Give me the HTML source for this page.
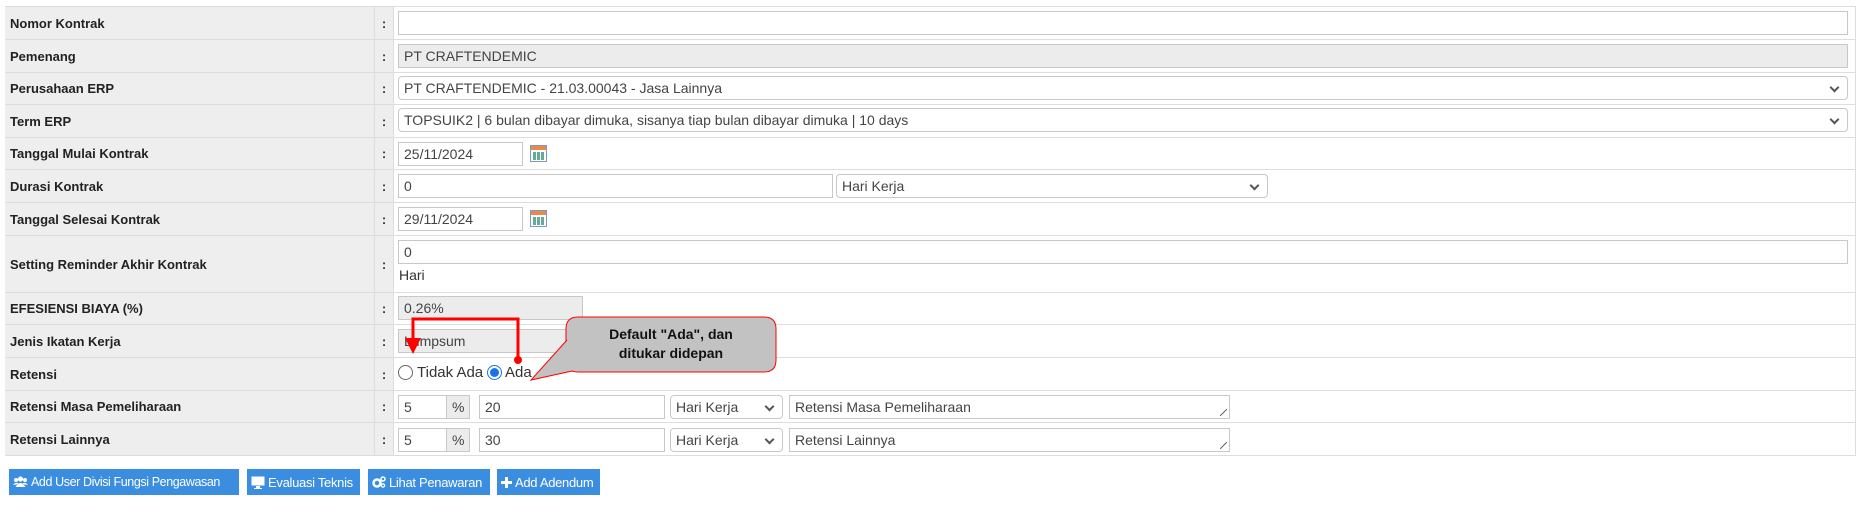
<!DOCTYPE html>
<html><head><meta charset="utf-8"><style>
*{box-sizing:border-box;margin:0;padding:0}
body{width:1858px;height:506px;background:#fff;font-family:"Liberation Sans",Arial,sans-serif;position:relative;overflow:hidden;color:#333}
.a{position:absolute}
.lab{position:absolute;left:5px;width:369px;background:#eee;border-top:1px solid #ddd;font-weight:bold;font-size:13px;color:#222;padding-left:5px;display:flex;align-items:center}
.col{position:absolute;left:374px;width:19px;background:#eee;border-top:1px solid #ddd;border-left:1px solid #ddd;font-weight:bold;font-size:13px;display:flex;align-items:center;justify-content:center}
.val{position:absolute;left:393px;width:1462px;border-top:1px solid #ddd;border-left:1px solid #ddd;background:#fff}
.in{position:absolute;border:1px solid #c8c8c8;background:#fff;font-size:14px;color:#444;padding-left:5px;display:flex;align-items:center;height:24px}
.g{background:#ececec}
.sel{border-radius:4px}
.sel:after{content:"";position:absolute;right:9px;top:7px;width:5px;height:5px;border-right:2px solid #555;border-bottom:2px solid #555;transform:rotate(45deg)}
.btn{position:absolute;top:469px;height:26px;background:#3a8ddf;color:#fff;font-size:13px;display:flex;align-items:center;padding-left:4px;gap:3px;white-space:nowrap;letter-spacing:-0.3px}
.cal{position:absolute;width:17px;height:17px;border:1px solid #7a9cc0;background:linear-gradient(#e98a4a 0 4px,#fff 4px);}
.cal:after{content:"";position:absolute;left:2px;top:6px;width:11px;height:8px;background:repeating-linear-gradient(90deg,#6a9 0 3px,#fff 3px 4px)}
.rad{position:absolute;width:15px;height:15px;border-radius:50%;border:1px solid #666;background:#fff}
.ta:after{content:"";position:absolute;right:2px;bottom:2px;width:7px;height:7px;background:linear-gradient(135deg,transparent 45%,#666 45% 55%,transparent 55%)}
</style></head><body>
<div class="a" style="left:5px;top:6px;width:1851px;height:450px;border:1px solid #ddd;border-top:none"></div>

<div class="lab" style="top:6px;height:33px">Nomor Kontrak</div><div class="col" style="top:6px;height:33px">:</div><div class="val" style="top:6px;height:33px"></div>
<div class="lab" style="top:39px;height:33px">Pemenang</div><div class="col" style="top:39px;height:33px">:</div><div class="val" style="top:39px;height:33px"></div>
<div class="lab" style="top:72px;height:32px">Perusahaan ERP</div><div class="col" style="top:72px;height:32px">:</div><div class="val" style="top:72px;height:32px"></div>
<div class="lab" style="top:104px;height:33px">Term ERP</div><div class="col" style="top:104px;height:33px">:</div><div class="val" style="top:104px;height:33px"></div>
<div class="lab" style="top:137px;height:32px">Tanggal Mulai Kontrak</div><div class="col" style="top:137px;height:32px">:</div><div class="val" style="top:137px;height:32px"></div>
<div class="lab" style="top:169px;height:33px">Durasi Kontrak</div><div class="col" style="top:169px;height:33px">:</div><div class="val" style="top:169px;height:33px"></div>
<div class="lab" style="top:202px;height:33px">Tanggal Selesai Kontrak</div><div class="col" style="top:202px;height:33px">:</div><div class="val" style="top:202px;height:33px"></div>
<div class="lab" style="top:235px;height:57px">Setting Reminder Akhir Kontrak</div><div class="col" style="top:235px;height:57px">:</div><div class="val" style="top:235px;height:57px"></div>
<div class="lab" style="top:292px;height:32px">EFESIENSI BIAYA (%)</div><div class="col" style="top:292px;height:32px">:</div><div class="val" style="top:292px;height:32px"></div>
<div class="lab" style="top:324px;height:33px">Jenis Ikatan Kerja</div><div class="col" style="top:324px;height:33px">:</div><div class="val" style="top:324px;height:33px"></div>
<div class="lab" style="top:357px;height:33px">Retensi</div><div class="col" style="top:357px;height:33px">:</div><div class="val" style="top:357px;height:33px"></div>
<div class="lab" style="top:390px;height:32px">Retensi Masa Pemeliharaan</div><div class="col" style="top:390px;height:32px">:</div><div class="val" style="top:390px;height:32px"></div>
<div class="lab" style="top:422px;height:33px">Retensi Lainnya</div><div class="col" style="top:422px;height:33px">:</div><div class="val" style="top:422px;height:33px"></div>

<div class="in" style="left:398px;top:11px;width:1450px"></div>
<div class="in g" style="left:398px;top:44px;width:1450px">PT CRAFTENDEMIC</div>
<div class="in sel" style="left:398px;top:76px;width:1450px">PT CRAFTENDEMIC - 21.03.00043 - Jasa Lainnya</div>
<div class="in sel" style="left:398px;top:108px;width:1450px">TOPSUIK2 | 6 bulan dibayar dimuka, sisanya tiap bulan dibayar dimuka | 10 days</div>
<div class="in" style="left:398px;top:142px;width:125px">25/11/2024</div><div class="cal" style="left:530px;top:145px"></div>
<div class="in" style="left:398px;top:174px;width:435px">0</div>
<div class="in sel" style="left:836px;top:174px;width:432px">Hari Kerja</div>
<div class="in" style="left:398px;top:207px;width:125px">29/11/2024</div><div class="cal" style="left:530px;top:210px"></div>
<div class="in" style="left:398px;top:240px;width:1450px">0</div>
<div class="a" style="left:399px;top:267px;font-size:14px;color:#333">Hari</div>
<div class="in g" style="left:398px;top:296px;width:185px">0.26%</div>
<div class="in g" style="left:398px;top:329px;width:185px">Lumpsum</div>

<div class="rad" style="left:398px;top:365px"></div>
<div class="a" style="left:417px;top:364px;font-size:15px;color:#333">Tidak Ada</div>
<div class="rad" style="left:487px;top:365px;border:1px solid #1a73e8"><div class="a" style="left:2px;top:2px;width:9px;height:9px;border-radius:50%;background:#1a73e8"></div></div>
<div class="a" style="left:505px;top:364px;font-size:15px;color:#333">Ada</div>

<div class="in" style="left:398px;top:395px;width:49px">5</div>
<div class="in g" style="left:446px;top:395px;width:24px">%</div>
<div class="in" style="left:479px;top:395px;width:186px">20</div>
<div class="in sel" style="left:670px;top:395px;width:113px">Hari Kerja</div>
<div class="in ta" style="left:789px;top:395px;width:441px">Retensi Masa Pemeliharaan</div>

<div class="in" style="left:398px;top:428px;width:49px">5</div>
<div class="in g" style="left:446px;top:428px;width:24px">%</div>
<div class="in" style="left:479px;top:428px;width:186px">30</div>
<div class="in sel" style="left:670px;top:428px;width:113px">Hari Kerja</div>
<div class="in ta" style="left:789px;top:428px;width:441px">Retensi Lainnya</div>

<svg class="a" style="left:0;top:0" width="1858" height="506">
<path d="M518 360 V319 H413 V340" fill="none" stroke="#f00" stroke-width="3"/>
<path d="M405 338 L421 338 L413 354 Z" fill="#f00"/>
<circle cx="518" cy="360" r="4" fill="#f00"/>
<path d="M578 317 Q566 317 566 329 V360 Q566 372 578 372 H764 Q776 372 776 360 V329 Q776 317 764 317 Z" fill="#c2c2c2" stroke="#f00" stroke-width="1"/>
<path d="M567 340 L531 380 L572 371" fill="#c2c2c2" stroke="#f00" stroke-width="1"/>
<path d="M567 342 L567 370 L571 370 Z" fill="#c2c2c2"/>
<text x="671" y="339" text-anchor="middle" font-family="Liberation Sans" font-weight="bold" font-size="14" fill="#111">Default "Ada", dan</text>
<text x="671" y="358" text-anchor="middle" font-family="Liberation Sans" font-weight="bold" font-size="14" fill="#111">ditukar didepan</text>
</svg>

<div class="btn" style="left:9px;width:230px;font-size:12.5px;letter-spacing:-0.4px"><svg width="15" height="12" viewBox="0 0 15 12"><circle cx="7.5" cy="3" r="2.6" fill="#fff"/><circle cx="3" cy="4" r="2" fill="#fff"/><circle cx="12" cy="4" r="2" fill="#fff"/><path d="M2.5 11 Q7.5 3 12.5 11Z M0 9 Q3 5 6 8 Z M9 8 Q12 5 15 9Z" fill="#fff"/></svg>Add User Divisi Fungsi Pengawasan</div>
<div class="btn" style="left:247px;width:113px"><svg width="14" height="13" viewBox="0 0 14 13"><rect x="0.5" y="0.5" width="13" height="9" fill="#fff"/><rect x="5" y="10" width="4" height="2" fill="#fff"/><rect x="3" y="12" width="8" height="1" fill="#fff"/></svg>Evaluasi Teknis</div>
<div class="btn" style="left:368px;width:122px"><svg width="14" height="12" viewBox="0 0 14 12"><circle cx="5" cy="7" r="3.5" fill="none" stroke="#fff" stroke-width="2.5"/><circle cx="11" cy="3" r="2" fill="none" stroke="#fff" stroke-width="1.5"/><circle cx="11" cy="9.5" r="1.6" fill="none" stroke="#fff" stroke-width="1.3"/></svg>Lihat Penawaran</div>
<div class="btn" style="left:497px;width:103px"><svg width="11" height="11" viewBox="0 0 11 11"><path d="M4 0h3v4h4v3H7v4H4V7H0V4h4z" fill="#fff"/></svg>Add Adendum</div>
</body></html>
